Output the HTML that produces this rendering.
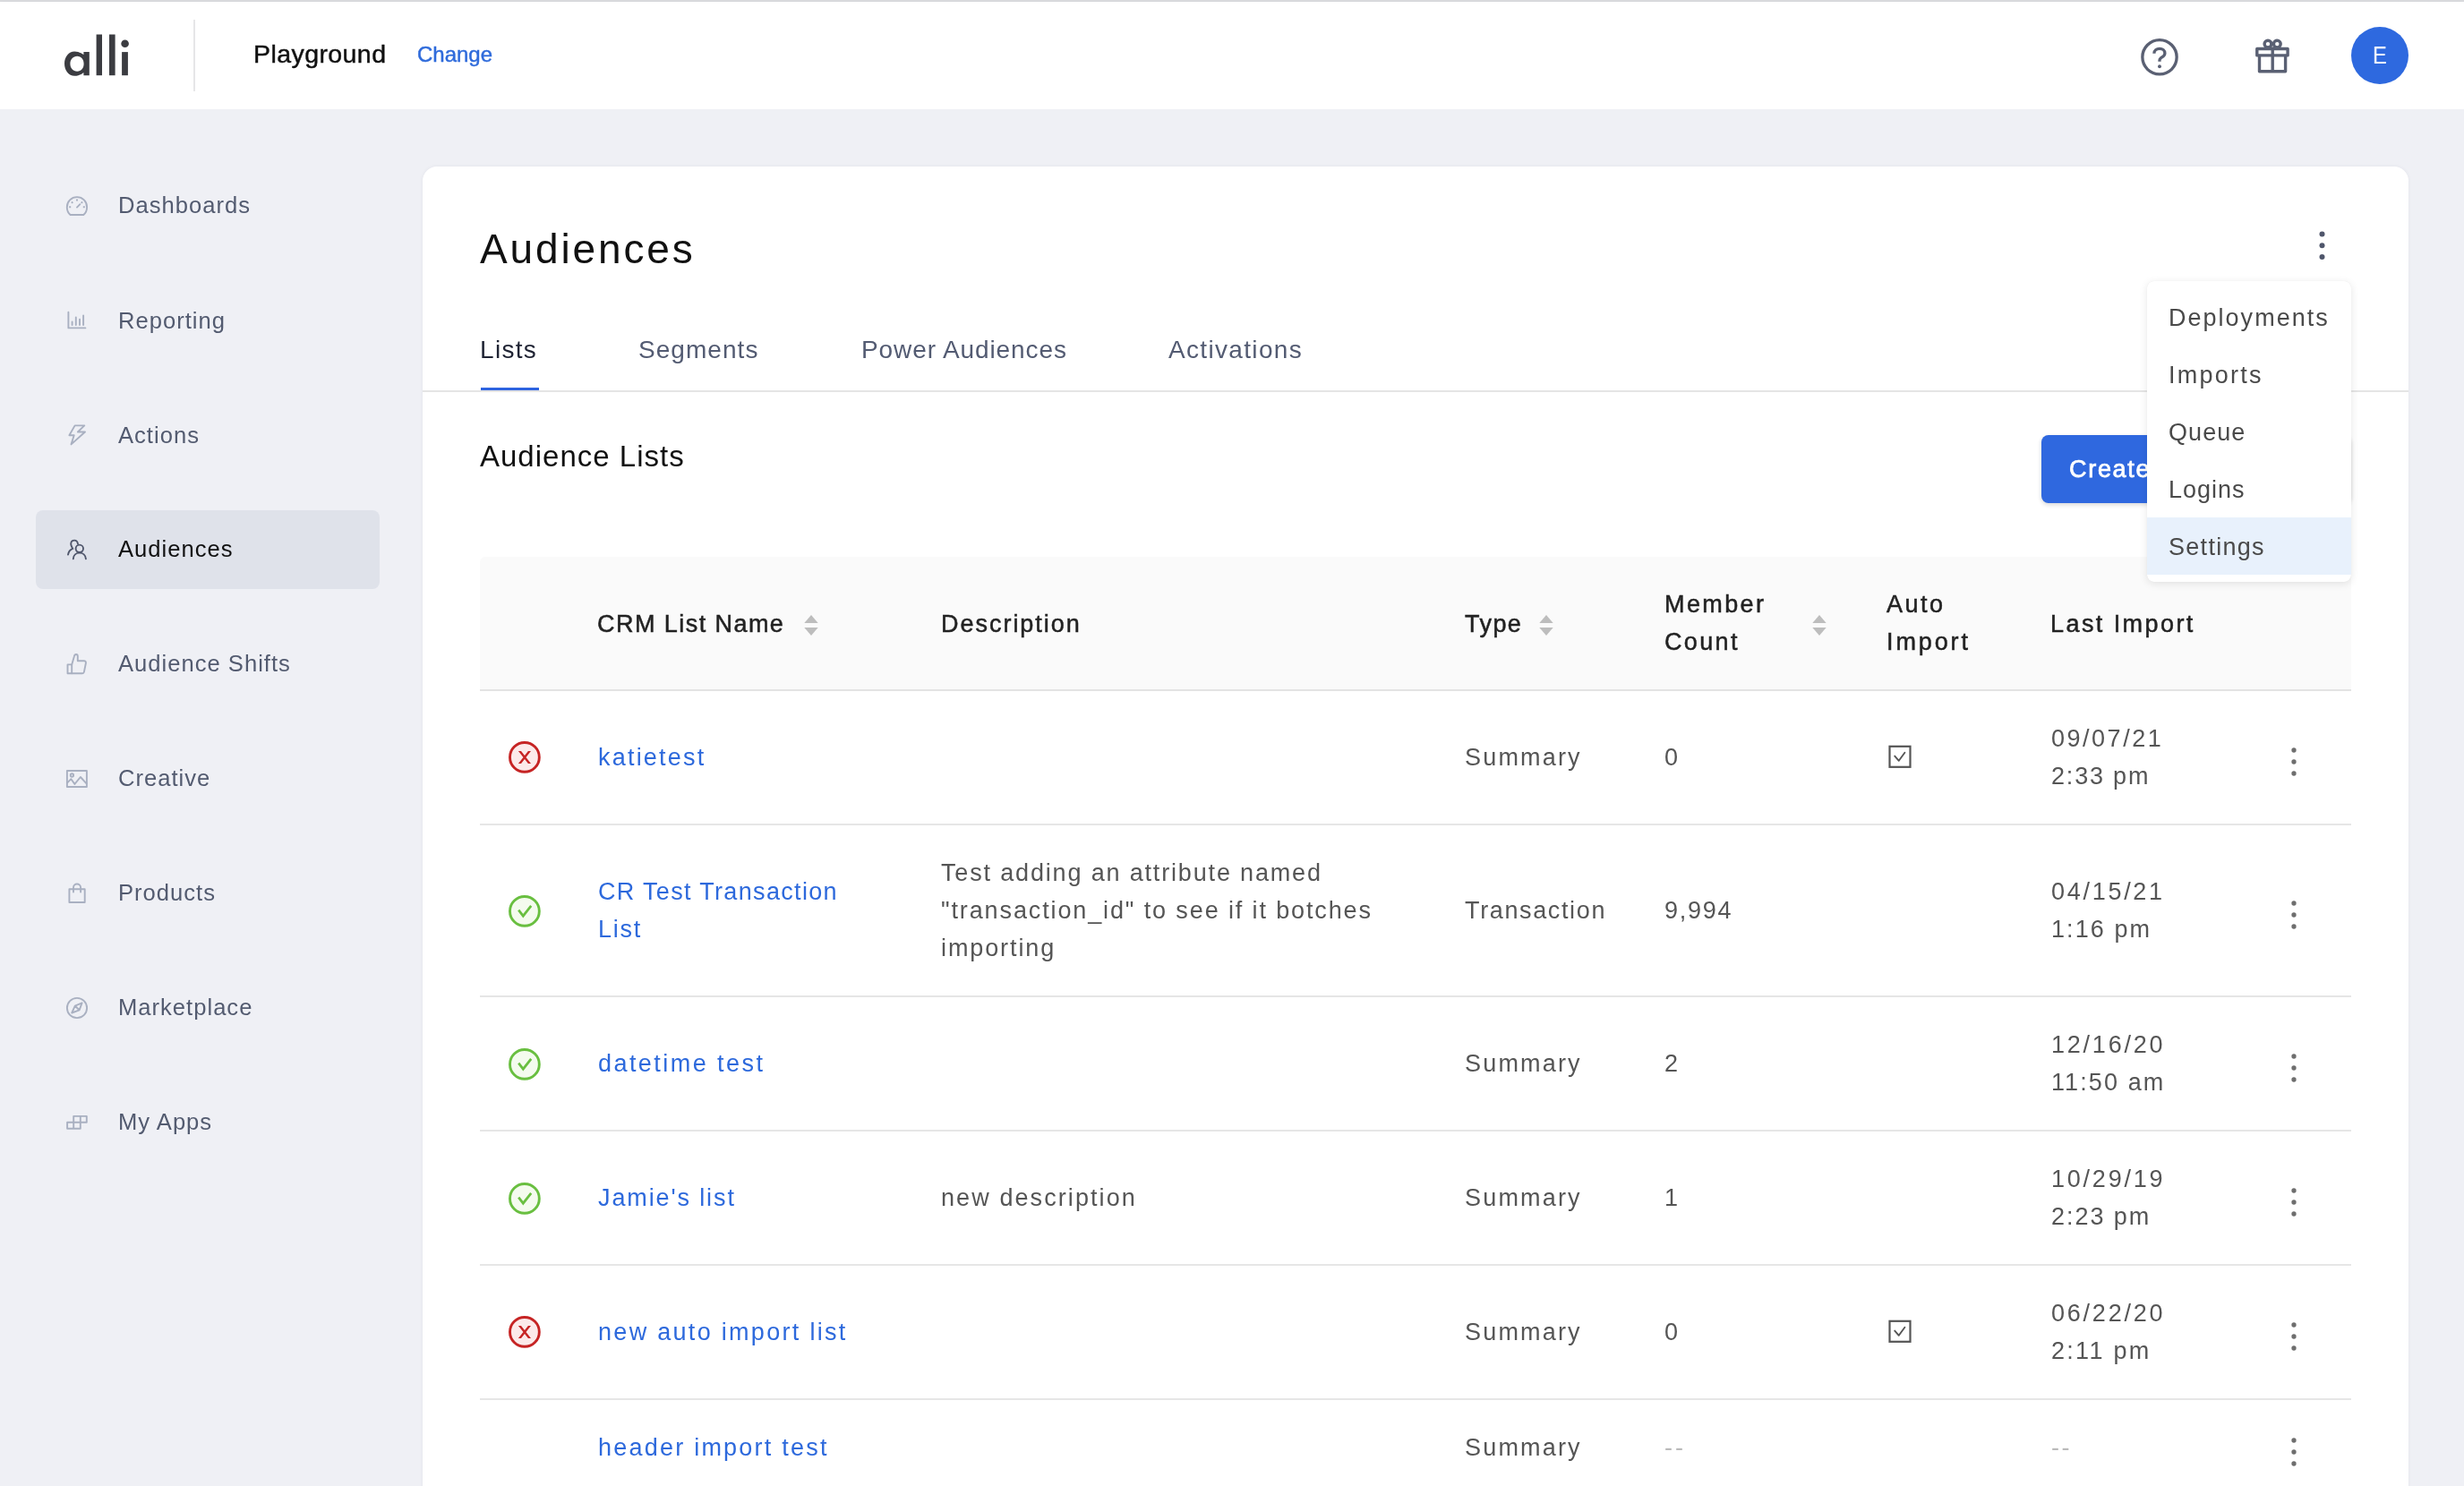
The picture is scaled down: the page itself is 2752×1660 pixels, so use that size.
<!DOCTYPE html>
<html><head><meta charset="utf-8"><style>
html,body{margin:0;padding:0;width:2752px;height:1660px;overflow:hidden;background:#EFF0F5;}
body{position:relative;font-family:"Liberation Sans",sans-serif;}
.t{position:absolute;white-space:nowrap;will-change:transform;}
svg{overflow:visible}
</style></head><body>
<div style="position:absolute;left:0px;top:0px;width:2752px;height:2px;background:#D9DADD"></div>
<div style="position:absolute;left:0px;top:2px;width:2752px;height:120px;background:#fff;box-shadow:0 1px 3px rgba(30,40,60,0.07)"></div>
<svg style="position:absolute;left:0px;top:0px;" width="200" height="122" viewBox="0 0 200 122"><g fill="#3B3C41">
<path fill-rule="evenodd" d="M83.2,57.4 C89,57.4 93.4,61 93.4,61 L93.4,58.1 L99.8,58.1 L99.8,84.2 L93.4,84.2 L93.4,81 C93.4,81 89.5,84.8 83.2,84.8 C76.8,84.8 72,78.9 72,71.1 C72,63.3 76.8,57.4 83.2,57.4 Z M86.2,62.8 C81.6,62.8 78.4,66.4 78.4,71.3 C78.4,76.2 81.6,79.8 86.2,79.8 C90.8,79.8 93.6,76.2 93.6,71.3 C93.6,66.4 90.8,62.8 86.2,62.8 Z"/>
<rect x="107.6" y="38.5" width="6.4" height="45.7"/>
<rect x="122" y="38.5" width="6.6" height="45.7"/>
<rect x="136.1" y="58.1" width="6.8" height="26.1"/>
<circle cx="139.6" cy="48.7" r="4.3"/>
</g></svg>
<div style="position:absolute;left:216px;top:22px;width:2px;height:80px;background:#E6E6E8"></div>
<div class="t" style="left:282.80px;top:46.27px;font-size:28.5px;line-height:28.5px;color:#111;letter-spacing:0.422px;-webkit-text-stroke:0.45px #111;">Playground</div>
<div class="t" style="left:465.80px;top:49.48px;font-size:24px;line-height:24px;color:#2F6BDB;letter-spacing:-0.010px;-webkit-text-stroke:0.45px #2F6BDB;">Change</div>
<svg style="position:absolute;left:2380px;top:32px;" width="64" height="64" viewBox="0 0 64 64"><g fill="none" stroke="#5A6073" stroke-width="3.3">
<circle cx="32" cy="31.8" r="19.15"/>
<path d="M25.9,27.8 C25.9,24.5 28.6,22.4 32,22.4 C35.4,22.4 37.9,24.6 37.9,27.5 C37.9,30.6 35.2,31.6 33.4,32.8 C32.5,33.4 32,34.2 32,35.3 V36.8"/>
</g><circle cx="32" cy="42.3" r="1.95" fill="#5A6073"/></svg>
<svg style="position:absolute;left:2510px;top:36px;" width="56" height="56" viewBox="0 0 56 56"><g fill="none" stroke="#5A6073" stroke-width="3.4" stroke-linejoin="round">
<circle cx="23" cy="13.1" r="3.9"/>
<circle cx="33.3" cy="13.1" r="3.9"/>
<rect x="10.8" y="18.5" width="34.3" height="7.4"/>
<path d="M13.5,25.9 V43.7 H42.6 V25.9"/>
<path d="M28.2,16.5 V43.7"/>
</g></svg>
<div style="position:absolute;left:2626px;top:30px;width:64px;height:64px;background:#2E69DF;border-radius:50%"></div>
<div class="t" style="left:2650.00px;top:49.14px;font-size:27px;line-height:27px;color:#fff;letter-spacing:0.000px;transform:scaleX(0.88);transform-origin:0 0;">E</div>
<div style="position:absolute;left:0px;top:122px;width:2752px;height:1538px;background:#EFF0F5"></div>
<div style="position:absolute;left:40px;top:570px;width:384px;height:88px;background:#DFE2EA;border-radius:8px"></div>
<div class="t" style="left:132.30px;top:217.32px;font-size:25.6px;line-height:25.6px;color:#535B70;letter-spacing:1.000px;">Dashboards</div>
<div class="t" style="left:132.30px;top:345.52px;font-size:25.6px;line-height:25.6px;color:#535B70;letter-spacing:1.000px;">Reporting</div>
<div class="t" style="left:132.30px;top:473.52px;font-size:25.6px;line-height:25.6px;color:#535B70;letter-spacing:1.000px;">Actions</div>
<div class="t" style="left:132.30px;top:601.32px;font-size:25.6px;line-height:25.6px;color:#111;letter-spacing:1.000px;">Audiences</div>
<div class="t" style="left:132.30px;top:729.32px;font-size:25.6px;line-height:25.6px;color:#535B70;letter-spacing:1.000px;">Audience Shifts</div>
<div class="t" style="left:132.30px;top:857.32px;font-size:25.6px;line-height:25.6px;color:#535B70;letter-spacing:1.000px;">Creative</div>
<div class="t" style="left:132.30px;top:985.32px;font-size:25.6px;line-height:25.6px;color:#535B70;letter-spacing:1.000px;">Products</div>
<div class="t" style="left:132.30px;top:1113.32px;font-size:25.6px;line-height:25.6px;color:#535B70;letter-spacing:1.000px;">Marketplace</div>
<div class="t" style="left:132.30px;top:1241.32px;font-size:25.6px;line-height:25.6px;color:#535B70;letter-spacing:1.000px;">My Apps</div>
<svg style="position:absolute;left:0px;top:0px;" width="200" height="1300" viewBox="0 0 200 1300">
<g fill="none" stroke="#A9B0C1" stroke-width="1.9" stroke-linecap="round" stroke-linejoin="round">
 <path d="M78.6,240 C75.9,237.6 74.8,234.6 74.8,231.4 C74.8,224.9 79.8,220.1 86,220.1 C92.2,220.1 97.1,224.9 97.1,231.4 C97.1,234.6 96,237.6 93.3,240 Z"/>
 <path d="M86,231.6 L89.4,228.2"/>
 <path d="M86,222.6 V224.6 M79.9,225.5 L81.3,226.9 M92.1,225.5 L90.7,226.9 M77.2,231.2 H79.2 M92.8,231.2 H94.8" stroke-linecap="butt"/>
 <path d="M76.4,348.8 V366.4 H95.4"/>
 <path d="M80.6,359.4 V363 M84.8,354.4 V363 M89,356.6 V363 M93.1,352.4 V363"/>
 <path d="M83.6,475.4 H94.3 L86.9,482.5 H95 L79.5,496.4 L82.7,486.2 H77.4 Z"/>
 <path d="M75.5,742.4 H80.2 V752.3 H75.5 Z"/>
 <path d="M80.2,742.6 L82.8,733.4 C83.2,731.6 84,731 85,731 C86.2,731 86.8,731.8 86.8,733.2 V738.2 H93.8 C95.2,738.2 96.2,739.2 95.9,740.8 L93.9,750.6 C93.7,751.6 92.9,752.3 91.9,752.3 H80.2"/>
 <rect x="74.9" y="861.0" width="22" height="18"/>
 <path d="M75,874.6 L79.4,870.2 L83.4,875.9 L89.9,868 L96.6,875.4"/>
 <circle cx="80.4" cy="866" r="1.7"/>
 <rect x="77.4" y="993.2" width="17.3" height="14.8"/>
 <path d="M82,996.6 V991.4 C82,989.2 83.8,987.5 86,987.5 C88.2,987.5 90.1,989.2 90.1,991.4 V996.6"/>
 <circle cx="86" cy="1126" r="11.1"/>
 <path d="M91.6,1120.3 L83.8,1123.7 L80.2,1131.5 L88.6,1128.3 Z M83.8,1123.7 L88.6,1128.3"/>
 <path d="M82.2,1246.9 H96.8 V1253.8 H89.8 V1260.8 H75.1 V1253.8 H82.2 Z M82.2,1253.8 H89.8 M89.8,1246.9 V1253.8 M82.2,1253.8 V1260.8"/>
</g>
<g fill="none" stroke="#4F566B" stroke-width="1.9" stroke-linecap="round">
 <path d="M87,607.6 C86.6,605 85.2,603.6 83.2,603.6 C80.8,603.6 79.2,605.4 79.2,607.8 C79.2,609.4 79.9,610.2 81.2,612.8 C78.1,614 76.6,616 76,619.6"/>
 <circle cx="88.8" cy="612.8" r="4.2"/>
 <path d="M81.8,624.3 C82,620.2 85,617.6 88.8,617.6 C92.6,617.6 95.6,620.2 95.9,624.3"/>
</g></svg>
<div style="position:absolute;left:472px;top:186px;width:2218px;height:1600px;background:#fff;border-radius:16px;box-shadow:0 0 4px rgba(30,40,60,0.06)"></div>
<div class="t" style="left:536.10px;top:255.45px;font-size:46px;line-height:46px;color:#111;letter-spacing:2.862px;">Audiences</div>
<svg style="position:absolute;left:2580px;top:250px;" width="28" height="48" viewBox="0 0 28 48"><g fill="#4F566B"><circle cx="13.5" cy="11.5" r="3"/><circle cx="13.5" cy="24.2" r="3"/><circle cx="13.5" cy="37" r="3"/></g></svg>
<div class="t" style="left:536.40px;top:376.59px;font-size:28px;line-height:28px;color:#1F2333;letter-spacing:1.312px;">Lists</div>
<div class="t" style="left:713.20px;top:376.59px;font-size:28px;line-height:28px;color:#535B72;letter-spacing:1.050px;">Segments</div>
<div class="t" style="left:961.60px;top:376.59px;font-size:28px;line-height:28px;color:#535B72;letter-spacing:0.896px;">Power Audiences</div>
<div class="t" style="left:1304.80px;top:376.59px;font-size:28px;line-height:28px;color:#535B72;letter-spacing:1.330px;">Activations</div>
<div style="position:absolute;left:472px;top:436px;width:2218px;height:2px;background:#E5E5E5"></div>
<div style="position:absolute;left:537px;top:433px;width:65px;height:3px;background:#2D63E0"></div>
<div class="t" style="left:535.60px;top:492.66px;font-size:33px;line-height:33px;color:#111;letter-spacing:1.004px;">Audience Lists</div>
<div style="position:absolute;left:2280px;top:486px;width:346px;height:76px;background:#2F68DF;border-radius:8px;box-shadow:0 2px 5px rgba(0,0,0,0.16)"></div>
<div class="t" style="left:2311.20px;top:511.14px;font-size:27px;line-height:27px;color:#fff;letter-spacing:1.700px;-webkit-text-stroke:0.75px #fff;">Create List</div>
<div style="position:absolute;left:536px;top:622px;width:2090px;height:148px;background:#FAFAFA;border-radius:6px 6px 0 0"></div>
<div style="position:absolute;left:536px;top:770px;width:2090px;height:2px;background:#E3E3E3"></div>
<div class="t" style="left:667.30px;top:683.54px;font-size:27px;line-height:27px;color:#222;letter-spacing:1.446px;-webkit-text-stroke:0.5px #222;">CRM List Name</div>
<svg style="position:absolute;left:897px;top:686px;" width="18" height="26" viewBox="0 0 18 26"><g fill="#BDBDBD"><path d="M1.3,10 L9,1 L16.7,10 Z"/><path d="M1.3,15 L16.7,15 L9,24 Z"/></g></svg>
<div class="t" style="left:1050.80px;top:683.54px;font-size:27px;line-height:27px;color:#222;letter-spacing:1.975px;-webkit-text-stroke:0.5px #222;">Description</div>
<div class="t" style="left:1635.80px;top:683.54px;font-size:27px;line-height:27px;color:#222;letter-spacing:1.450px;-webkit-text-stroke:0.5px #222;">Type</div>
<svg style="position:absolute;left:1718px;top:686px;" width="18" height="26" viewBox="0 0 18 26"><g fill="#BDBDBD"><path d="M1.3,10 L9,1 L16.7,10 Z"/><path d="M1.3,15 L16.7,15 L9,24 Z"/></g></svg>
<div class="t" style="left:1858.80px;top:662.14px;font-size:27px;line-height:27px;color:#222;letter-spacing:2.400px;-webkit-text-stroke:0.5px #222;">Member</div>
<div class="t" style="left:1858.80px;top:704.14px;font-size:27px;line-height:27px;color:#222;letter-spacing:2.363px;-webkit-text-stroke:0.5px #222;">Count</div>
<svg style="position:absolute;left:2023px;top:686px;" width="18" height="26" viewBox="0 0 18 26"><g fill="#BDBDBD"><path d="M1.3,10 L9,1 L16.7,10 Z"/><path d="M1.3,15 L16.7,15 L9,24 Z"/></g></svg>
<div class="t" style="left:2107.20px;top:662.14px;font-size:27px;line-height:27px;color:#222;letter-spacing:2.483px;-webkit-text-stroke:0.5px #222;">Auto</div>
<div class="t" style="left:2107.20px;top:704.14px;font-size:27px;line-height:27px;color:#222;letter-spacing:2.900px;-webkit-text-stroke:0.5px #222;">Import</div>
<div class="t" style="left:2290.20px;top:683.54px;font-size:27px;line-height:27px;color:#222;letter-spacing:2.425px;-webkit-text-stroke:0.5px #222;">Last Import</div>
<div style="position:absolute;left:536px;top:920px;width:2090px;height:2px;background:#E6E6E6"></div>
<div style="position:absolute;left:536px;top:1112px;width:2090px;height:2px;background:#E6E6E6"></div>
<div style="position:absolute;left:536px;top:1262px;width:2090px;height:2px;background:#E6E6E6"></div>
<div style="position:absolute;left:536px;top:1412px;width:2090px;height:2px;background:#E6E6E6"></div>
<div style="position:absolute;left:536px;top:1562px;width:2090px;height:2px;background:#E6E6E6"></div>
<svg style="position:absolute;left:560px;top:820.4px;" width="52" height="52" viewBox="0 0 52 52"><circle cx="25.9" cy="25.9" r="16.4" fill="#FCEAEA" stroke="#C62424" stroke-width="2.9"/><path d="M18.9,18.9 H22 L33,32.9 H29.9 Z M29.9,18.9 H33 L22,32.9 H18.9 Z" fill="#C62424"/></svg>
<div class="t" style="left:668.30px;top:833.44px;font-size:27px;line-height:27px;color:#2D69DC;letter-spacing:2.206px;">katietest</div>
<div class="t" style="left:1636.20px;top:833.44px;font-size:27px;line-height:27px;color:#555555;letter-spacing:2.183px;">Summary</div>
<div class="t" style="left:1858.80px;top:833.44px;font-size:27px;line-height:27px;color:#555555;letter-spacing:2.200px;">0</div>
<svg style="position:absolute;left:2104px;top:828.0px;" width="36" height="36" viewBox="0 0 36 36"><rect x="6.5" y="5.8" width="23" height="23" fill="none" stroke="#555" stroke-width="2.2"/><path d="M12.2,16.6 L16.8,21.8 L23.4,12.8" fill="none" stroke="#555" stroke-width="1.9" stroke-linecap="round" stroke-linejoin="round"/></svg>
<div class="t" style="left:2290.80px;top:811.94px;font-size:27px;line-height:27px;color:#555555;letter-spacing:2.514px;">09/07/21</div>
<div class="t" style="left:2290.80px;top:853.94px;font-size:27px;line-height:27px;color:#555555;letter-spacing:1.808px;">2:33 pm</div>
<svg style="position:absolute;left:2548px;top:828.6px;" width="28" height="44" viewBox="0 0 28 44"><g fill="#6E6E6E"><circle cx="14" cy="9" r="2.65"/><circle cx="14" cy="22" r="2.65"/><circle cx="14" cy="35" r="2.65"/></g></svg>
<svg style="position:absolute;left:560px;top:991.6px;" width="52" height="52" viewBox="0 0 52 52"><circle cx="25.9" cy="25.9" r="16.4" fill="#F4FBEE" stroke="#69BF40" stroke-width="2.9"/><path d="M19.2,24.6 L24.3,31.2 L33.2,19.8" fill="none" stroke="#69BF40" stroke-width="2.7" stroke-linecap="butt" stroke-linejoin="miter"/></svg>
<div class="t" style="left:668.30px;top:982.94px;font-size:27px;line-height:27px;color:#2D69DC;letter-spacing:1.333px;">CR Test Transaction</div>
<div class="t" style="left:668.30px;top:1024.94px;font-size:27px;line-height:27px;color:#2D69DC;letter-spacing:1.750px;">List</div>
<div class="t" style="left:1050.80px;top:961.94px;font-size:27px;line-height:27px;color:#555555;letter-spacing:1.836px;">Test adding an attribute named</div>
<div class="t" style="left:1050.80px;top:1003.94px;font-size:27px;line-height:27px;color:#555555;letter-spacing:1.878px;">&quot;transaction_id&quot; to see if it botches</div>
<div class="t" style="left:1050.80px;top:1045.94px;font-size:27px;line-height:27px;color:#555555;letter-spacing:1.900px;">importing</div>
<div class="t" style="left:1636.20px;top:1004.44px;font-size:27px;line-height:27px;color:#555555;letter-spacing:1.635px;">Transaction</div>
<div class="t" style="left:1858.80px;top:1004.44px;font-size:27px;line-height:27px;color:#555555;letter-spacing:1.762px;">9,994</div>
<div class="t" style="left:2290.80px;top:982.94px;font-size:27px;line-height:27px;color:#555555;letter-spacing:2.714px;">04/15/21</div>
<div class="t" style="left:2290.80px;top:1024.94px;font-size:27px;line-height:27px;color:#555555;letter-spacing:2.075px;">1:16 pm</div>
<svg style="position:absolute;left:2548px;top:999.6px;" width="28" height="44" viewBox="0 0 28 44"><g fill="#6E6E6E"><circle cx="14" cy="9" r="2.65"/><circle cx="14" cy="22" r="2.65"/><circle cx="14" cy="35" r="2.65"/></g></svg>
<svg style="position:absolute;left:560px;top:1162.6px;" width="52" height="52" viewBox="0 0 52 52"><circle cx="25.9" cy="25.9" r="16.4" fill="#F4FBEE" stroke="#69BF40" stroke-width="2.9"/><path d="M19.2,24.6 L24.3,31.2 L33.2,19.8" fill="none" stroke="#69BF40" stroke-width="2.7" stroke-linecap="butt" stroke-linejoin="miter"/></svg>
<div class="t" style="left:668.30px;top:1175.44px;font-size:27px;line-height:27px;color:#2D69DC;letter-spacing:2.442px;">datetime test</div>
<div class="t" style="left:1636.20px;top:1175.44px;font-size:27px;line-height:27px;color:#555555;letter-spacing:2.183px;">Summary</div>
<div class="t" style="left:1858.80px;top:1175.44px;font-size:27px;line-height:27px;color:#555555;letter-spacing:2.200px;">2</div>
<div class="t" style="left:2290.80px;top:1153.94px;font-size:27px;line-height:27px;color:#555555;letter-spacing:2.771px;">12/16/20</div>
<div class="t" style="left:2290.80px;top:1195.94px;font-size:27px;line-height:27px;color:#555555;letter-spacing:2.107px;">11:50 am</div>
<svg style="position:absolute;left:2548px;top:1170.6px;" width="28" height="44" viewBox="0 0 28 44"><g fill="#6E6E6E"><circle cx="14" cy="9" r="2.65"/><circle cx="14" cy="22" r="2.65"/><circle cx="14" cy="35" r="2.65"/></g></svg>
<svg style="position:absolute;left:560px;top:1312.6px;" width="52" height="52" viewBox="0 0 52 52"><circle cx="25.9" cy="25.9" r="16.4" fill="#F4FBEE" stroke="#69BF40" stroke-width="2.9"/><path d="M19.2,24.6 L24.3,31.2 L33.2,19.8" fill="none" stroke="#69BF40" stroke-width="2.7" stroke-linecap="butt" stroke-linejoin="miter"/></svg>
<div class="t" style="left:668.30px;top:1325.44px;font-size:27px;line-height:27px;color:#2D69DC;letter-spacing:1.882px;">Jamie&#x27;s list</div>
<div class="t" style="left:1050.80px;top:1325.44px;font-size:27px;line-height:27px;color:#555555;letter-spacing:2.086px;">new description</div>
<div class="t" style="left:1636.20px;top:1325.44px;font-size:27px;line-height:27px;color:#555555;letter-spacing:2.183px;">Summary</div>
<div class="t" style="left:1858.80px;top:1325.44px;font-size:27px;line-height:27px;color:#555555;letter-spacing:2.200px;">1</div>
<div class="t" style="left:2290.80px;top:1303.94px;font-size:27px;line-height:27px;color:#555555;letter-spacing:2.771px;">10/29/19</div>
<div class="t" style="left:2290.80px;top:1345.94px;font-size:27px;line-height:27px;color:#555555;letter-spacing:1.958px;">2:23 pm</div>
<svg style="position:absolute;left:2548px;top:1320.6px;" width="28" height="44" viewBox="0 0 28 44"><g fill="#6E6E6E"><circle cx="14" cy="9" r="2.65"/><circle cx="14" cy="22" r="2.65"/><circle cx="14" cy="35" r="2.65"/></g></svg>
<svg style="position:absolute;left:560px;top:1462.4px;" width="52" height="52" viewBox="0 0 52 52"><circle cx="25.9" cy="25.9" r="16.4" fill="#FCEAEA" stroke="#C62424" stroke-width="2.9"/><path d="M18.9,18.9 H22 L33,32.9 H29.9 Z M29.9,18.9 H33 L22,32.9 H18.9 Z" fill="#C62424"/></svg>
<div class="t" style="left:668.30px;top:1475.44px;font-size:27px;line-height:27px;color:#2D69DC;letter-spacing:2.300px;">new auto import list</div>
<div class="t" style="left:1636.20px;top:1475.44px;font-size:27px;line-height:27px;color:#555555;letter-spacing:2.183px;">Summary</div>
<div class="t" style="left:1858.80px;top:1475.44px;font-size:27px;line-height:27px;color:#555555;letter-spacing:2.200px;">0</div>
<svg style="position:absolute;left:2104px;top:1470.0px;" width="36" height="36" viewBox="0 0 36 36"><rect x="6.5" y="5.8" width="23" height="23" fill="none" stroke="#555" stroke-width="2.2"/><path d="M12.2,16.6 L16.8,21.8 L23.4,12.8" fill="none" stroke="#555" stroke-width="1.9" stroke-linecap="round" stroke-linejoin="round"/></svg>
<div class="t" style="left:2290.80px;top:1453.94px;font-size:27px;line-height:27px;color:#555555;letter-spacing:2.771px;">06/22/20</div>
<div class="t" style="left:2290.80px;top:1495.94px;font-size:27px;line-height:27px;color:#555555;letter-spacing:2.292px;">2:11 pm</div>
<svg style="position:absolute;left:2548px;top:1470.6px;" width="28" height="44" viewBox="0 0 28 44"><g fill="#6E6E6E"><circle cx="14" cy="9" r="2.65"/><circle cx="14" cy="22" r="2.65"/><circle cx="14" cy="35" r="2.65"/></g></svg>
<div class="t" style="left:668.30px;top:1604.44px;font-size:27px;line-height:27px;color:#2D69DC;letter-spacing:2.229px;">header import test</div>
<div class="t" style="left:1636.20px;top:1604.44px;font-size:27px;line-height:27px;color:#555555;letter-spacing:2.183px;">Summary</div>
<div class="t" style="left:1858.80px;top:1604.44px;font-size:27px;line-height:27px;color:#BBBBBB;letter-spacing:3.000px;">--</div>
<div class="t" style="left:2290.50px;top:1604.44px;font-size:27px;line-height:27px;color:#BBBBBB;letter-spacing:2.600px;">--</div>
<svg style="position:absolute;left:2548px;top:1599.6px;" width="28" height="44" viewBox="0 0 28 44"><g fill="#6E6E6E"><circle cx="14" cy="9" r="2.65"/><circle cx="14" cy="22" r="2.65"/><circle cx="14" cy="35" r="2.65"/></g></svg>
<div style="position:absolute;left:2398px;top:314px;width:228px;height:336px;background:#fff;border-radius:8px;box-shadow:0 2px 10px rgba(0,0,0,0.10),0 0 1px rgba(0,0,0,0.10);overflow:hidden"></div>
<div style="position:absolute;left:2398px;top:578px;width:228px;height:64px;background:#E8F1FC"></div>
<div class="t" style="left:2422.00px;top:341.64px;font-size:27px;line-height:27px;color:#4A4A4A;letter-spacing:2.015px;">Deployments</div>
<div class="t" style="left:2422.00px;top:405.64px;font-size:27px;line-height:27px;color:#4A4A4A;letter-spacing:2.267px;">Imports</div>
<div class="t" style="left:2422.00px;top:469.64px;font-size:27px;line-height:27px;color:#4A4A4A;letter-spacing:1.062px;">Queue</div>
<div class="t" style="left:2422.00px;top:533.64px;font-size:27px;line-height:27px;color:#4A4A4A;letter-spacing:0.970px;">Logins</div>
<div class="t" style="left:2422.00px;top:597.64px;font-size:27px;line-height:27px;color:#4A4A4A;letter-spacing:1.293px;">Settings</div>
</body></html>
